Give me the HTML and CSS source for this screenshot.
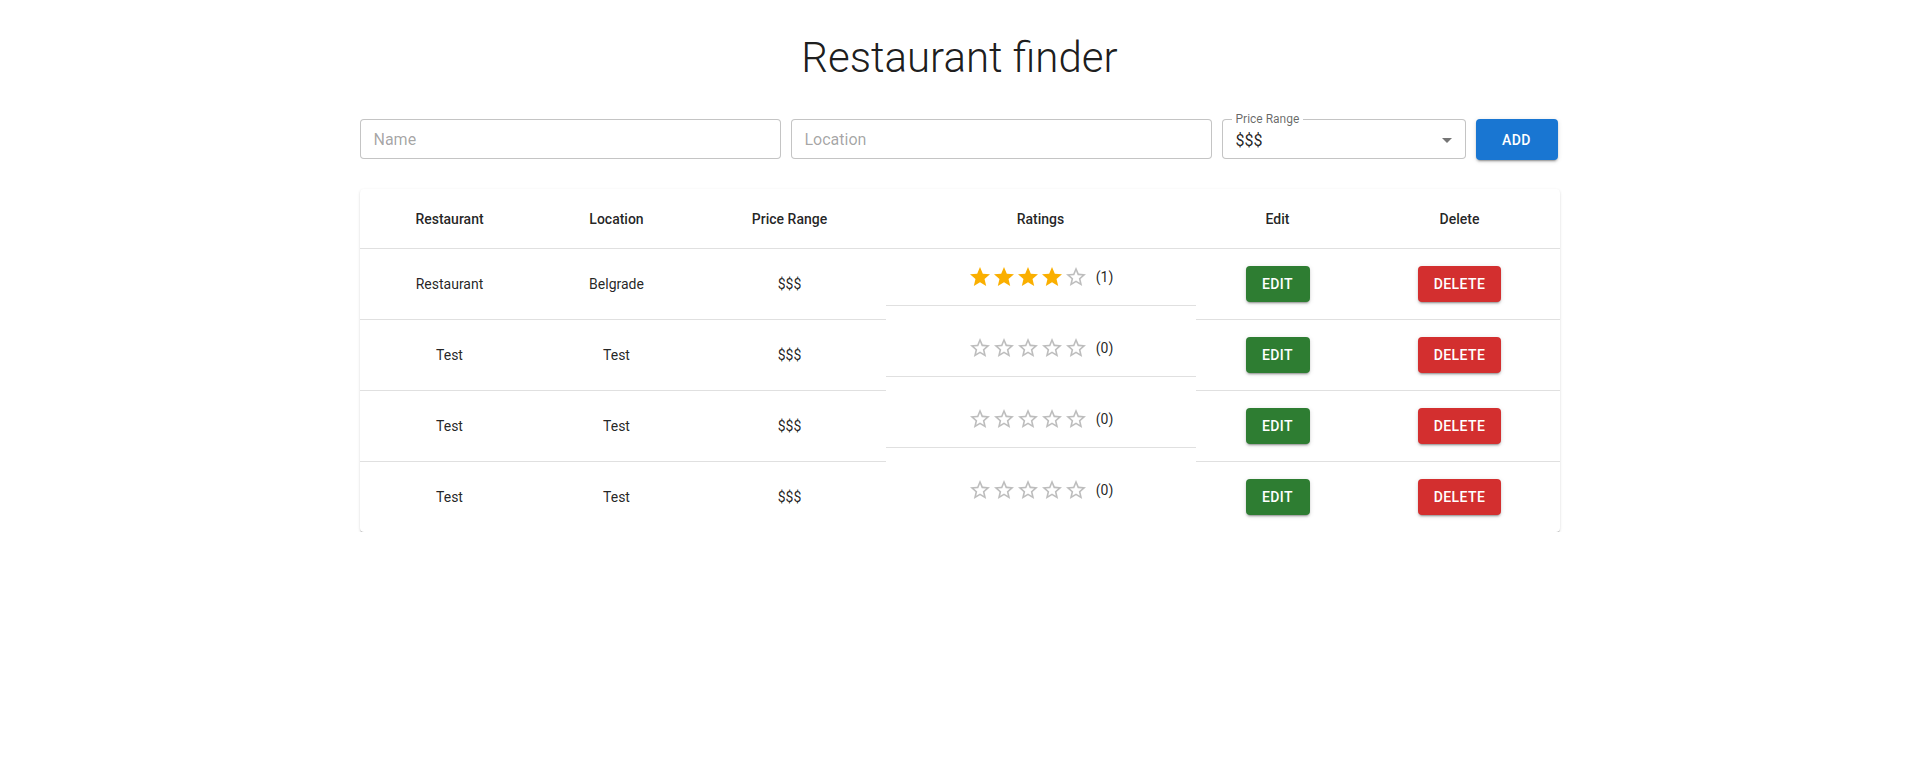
FILE: index.html
```html
<!DOCTYPE html>
<html lang="en">
<head>
<meta charset="utf-8">
<title>Restaurant finder</title>
<link rel="stylesheet" href="styles.css">
</head>
<body>
<div class="page">
  <h1 class="title">Restaurant finder</h1>
  <div class="form-row">
    <div class="field field-text"><input class="input" type="text" placeholder="Name"></div>
    <div class="field field-text"><input class="input" type="text" placeholder="Location"></div>
    <div class="field field-select">
      <span class="field-label">Price Range</span>
      <span class="select-value">$$$</span>
      <svg class="select-arrow" viewBox="0 0 24 24" width="24" height="24"><path d="M7 10l5 5 5-5z"/></svg>
    </div>
    <button class="btn btn-blue btn-add">ADD</button>
  </div>

  <div class="paper">
    <table class="table">
      <colgroup>
        <col class="c-name"><col class="c-loc"><col class="c-price"><col class="c-rate"><col class="c-edit"><col class="c-del">
      </colgroup>
      <thead>
        <tr>
          <th>Restaurant</th><th>Location</th><th>Price Range</th><th>Ratings</th><th>Edit</th><th>Delete</th>
        </tr>
      </thead>
      <tbody>
        <tr>
          <td>Restaurant</td><td>Belgrade</td><td>$$$</td>
          <td class="rate-cell"><div class="rate-inner"><span class="stars">
            <svg class="star on" viewBox="0 0 24 24"><path d="M12 17.27L18.18 21l-1.64-7.03L22 9.24l-7.19-.61L12 2 9.19 8.63 2 9.24l5.46 4.73L5.82 21z"/></svg>
            <svg class="star on" viewBox="0 0 24 24"><path d="M12 17.27L18.18 21l-1.64-7.03L22 9.24l-7.19-.61L12 2 9.19 8.63 2 9.24l5.46 4.73L5.82 21z"/></svg>
            <svg class="star on" viewBox="0 0 24 24"><path d="M12 17.27L18.18 21l-1.64-7.03L22 9.24l-7.19-.61L12 2 9.19 8.63 2 9.24l5.46 4.73L5.82 21z"/></svg>
            <svg class="star on" viewBox="0 0 24 24"><path d="M12 17.27L18.18 21l-1.64-7.03L22 9.24l-7.19-.61L12 2 9.19 8.63 2 9.24l5.46 4.73L5.82 21z"/></svg>
            <svg class="star off" viewBox="0 0 24 24"><path d="M22 9.24l-7.19-.62L12 2 9.19 8.63 2 9.24l5.46 4.73L5.82 21 12 17.27 18.18 21l-1.63-7.03L22 9.24zM12 15.4l-3.76 2.27 1-4.28-3.32-2.88 4.38-.38L12 6.1l1.71 4.04 4.38.38-3.32 2.88 1 4.28L12 15.4z"/></svg>
          </span><span class="count">(1)</span></div></td>
          <td class="btn-cell"><button class="btn btn-green">EDIT</button></td>
          <td class="btn-cell"><button class="btn btn-red">DELETE</button></td>
        </tr>
        <tr>
          <td>Test</td><td>Test</td><td>$$$</td>
          <td class="rate-cell"><div class="rate-inner"><span class="stars">
            <svg class="star off" viewBox="0 0 24 24"><path d="M22 9.24l-7.19-.62L12 2 9.19 8.63 2 9.24l5.46 4.73L5.82 21 12 17.27 18.18 21l-1.63-7.03L22 9.24zM12 15.4l-3.76 2.27 1-4.28-3.32-2.88 4.38-.38L12 6.1l1.71 4.04 4.38.38-3.32 2.88 1 4.28L12 15.4z"/></svg>
            <svg class="star off" viewBox="0 0 24 24"><path d="M22 9.24l-7.19-.62L12 2 9.19 8.63 2 9.24l5.46 4.73L5.82 21 12 17.27 18.18 21l-1.63-7.03L22 9.24zM12 15.4l-3.76 2.27 1-4.28-3.32-2.88 4.38-.38L12 6.1l1.71 4.04 4.38.38-3.32 2.88 1 4.28L12 15.4z"/></svg>
            <svg class="star off" viewBox="0 0 24 24"><path d="M22 9.24l-7.19-.62L12 2 9.19 8.63 2 9.24l5.46 4.73L5.82 21 12 17.27 18.18 21l-1.63-7.03L22 9.24zM12 15.4l-3.76 2.27 1-4.28-3.32-2.88 4.38-.38L12 6.1l1.71 4.04 4.38.38-3.32 2.88 1 4.28L12 15.4z"/></svg>
            <svg class="star off" viewBox="0 0 24 24"><path d="M22 9.24l-7.19-.62L12 2 9.19 8.63 2 9.24l5.46 4.73L5.82 21 12 17.27 18.18 21l-1.63-7.03L22 9.24zM12 15.4l-3.76 2.27 1-4.28-3.32-2.88 4.38-.38L12 6.1l1.71 4.04 4.38.38-3.32 2.88 1 4.28L12 15.4z"/></svg>
            <svg class="star off" viewBox="0 0 24 24"><path d="M22 9.24l-7.19-.62L12 2 9.19 8.63 2 9.24l5.46 4.73L5.82 21 12 17.27 18.18 21l-1.63-7.03L22 9.24zM12 15.4l-3.76 2.27 1-4.28-3.32-2.88 4.38-.38L12 6.1l1.71 4.04 4.38.38-3.32 2.88 1 4.28L12 15.4z"/></svg>
          </span><span class="count">(0)</span></div></td>
          <td class="btn-cell"><button class="btn btn-green">EDIT</button></td>
          <td class="btn-cell"><button class="btn btn-red">DELETE</button></td>
        </tr>
        <tr>
          <td>Test</td><td>Test</td><td>$$$</td>
          <td class="rate-cell"><div class="rate-inner"><span class="stars">
            <svg class="star off" viewBox="0 0 24 24"><path d="M22 9.24l-7.19-.62L12 2 9.19 8.63 2 9.24l5.46 4.73L5.82 21 12 17.27 18.18 21l-1.63-7.03L22 9.24zM12 15.4l-3.76 2.27 1-4.28-3.32-2.88 4.38-.38L12 6.1l1.71 4.04 4.38.38-3.32 2.88 1 4.28L12 15.4z"/></svg>
            <svg class="star off" viewBox="0 0 24 24"><path d="M22 9.24l-7.19-.62L12 2 9.19 8.63 2 9.24l5.46 4.73L5.82 21 12 17.27 18.18 21l-1.63-7.03L22 9.24zM12 15.4l-3.76 2.27 1-4.28-3.32-2.88 4.38-.38L12 6.1l1.71 4.04 4.38.38-3.32 2.88 1 4.28L12 15.4z"/></svg>
            <svg class="star off" viewBox="0 0 24 24"><path d="M22 9.24l-7.19-.62L12 2 9.19 8.63 2 9.24l5.46 4.73L5.82 21 12 17.27 18.18 21l-1.63-7.03L22 9.24zM12 15.4l-3.76 2.27 1-4.28-3.32-2.88 4.38-.38L12 6.1l1.71 4.04 4.38.38-3.32 2.88 1 4.28L12 15.4z"/></svg>
            <svg class="star off" viewBox="0 0 24 24"><path d="M22 9.24l-7.19-.62L12 2 9.19 8.63 2 9.24l5.46 4.73L5.82 21 12 17.27 18.18 21l-1.63-7.03L22 9.24zM12 15.4l-3.76 2.27 1-4.28-3.32-2.88 4.38-.38L12 6.1l1.71 4.04 4.38.38-3.32 2.88 1 4.28L12 15.4z"/></svg>
            <svg class="star off" viewBox="0 0 24 24"><path d="M22 9.24l-7.19-.62L12 2 9.19 8.63 2 9.24l5.46 4.73L5.82 21 12 17.27 18.18 21l-1.63-7.03L22 9.24zM12 15.4l-3.76 2.27 1-4.28-3.32-2.88 4.38-.38L12 6.1l1.71 4.04 4.38.38-3.32 2.88 1 4.28L12 15.4z"/></svg>
          </span><span class="count">(0)</span></div></td>
          <td class="btn-cell"><button class="btn btn-green">EDIT</button></td>
          <td class="btn-cell"><button class="btn btn-red">DELETE</button></td>
        </tr>
        <tr>
          <td>Test</td><td>Test</td><td>$$$</td>
          <td class="rate-cell"><div class="rate-inner"><span class="stars">
            <svg class="star off" viewBox="0 0 24 24"><path d="M22 9.24l-7.19-.62L12 2 9.19 8.63 2 9.24l5.46 4.73L5.82 21 12 17.27 18.18 21l-1.63-7.03L22 9.24zM12 15.4l-3.76 2.27 1-4.28-3.32-2.88 4.38-.38L12 6.1l1.71 4.04 4.38.38-3.32 2.88 1 4.28L12 15.4z"/></svg>
            <svg class="star off" viewBox="0 0 24 24"><path d="M22 9.24l-7.19-.62L12 2 9.19 8.63 2 9.24l5.46 4.73L5.82 21 12 17.27 18.18 21l-1.63-7.03L22 9.24zM12 15.4l-3.76 2.27 1-4.28-3.32-2.88 4.38-.38L12 6.1l1.71 4.04 4.38.38-3.32 2.88 1 4.28L12 15.4z"/></svg>
            <svg class="star off" viewBox="0 0 24 24"><path d="M22 9.24l-7.19-.62L12 2 9.19 8.63 2 9.24l5.46 4.73L5.82 21 12 17.27 18.18 21l-1.63-7.03L22 9.24zM12 15.4l-3.76 2.27 1-4.28-3.32-2.88 4.38-.38L12 6.1l1.71 4.04 4.38.38-3.32 2.88 1 4.28L12 15.4z"/></svg>
            <svg class="star off" viewBox="0 0 24 24"><path d="M22 9.24l-7.19-.62L12 2 9.19 8.63 2 9.24l5.46 4.73L5.82 21 12 17.27 18.18 21l-1.63-7.03L22 9.24zM12 15.4l-3.76 2.27 1-4.28-3.32-2.88 4.38-.38L12 6.1l1.71 4.04 4.38.38-3.32 2.88 1 4.28L12 15.4z"/></svg>
            <svg class="star off" viewBox="0 0 24 24"><path d="M22 9.24l-7.19-.62L12 2 9.19 8.63 2 9.24l5.46 4.73L5.82 21 12 17.27 18.18 21l-1.63-7.03L22 9.24zM12 15.4l-3.76 2.27 1-4.28-3.32-2.88 4.38-.38L12 6.1l1.71 4.04 4.38.38-3.32 2.88 1 4.28L12 15.4z"/></svg>
          </span><span class="count">(0)</span></div></td>
          <td class="btn-cell"><button class="btn btn-green">EDIT</button></td>
          <td class="btn-cell"><button class="btn btn-red">DELETE</button></td>
        </tr>
      </tbody>
    </table>
  </div>
</div>
</body>
</html>
```

FILE: styles.css
```css
* { box-sizing: border-box; }
html, body { margin: 0; padding: 0; background: #fff; }
body {
  font-family: Roboto, "Liberation Sans", Arial, sans-serif;
  color: rgba(0, 0, 0, 0.87);
  -webkit-font-smoothing: antialiased;
}
.page {
  width: 1200px;
  margin: 0 auto;
  display: flex;
  flex-direction: column;
}
.title {
  margin: 33px 0 0;
  font-size: 42px;
  font-weight: 300;
  line-height: 1.2;
  text-align: center;
  color: rgba(0, 0, 0, 0.9);
}
.form-row {
  margin-top: 36px;
  display: flex;
  gap: 10px;
  height: 41px;
}
.field {
  height: 40px;
  border: 1px solid rgba(0, 0, 0, 0.23);
  border-radius: 4px;
  background: #fff;
}
.field-text { flex: 0 0 421px; }
.input {
  width: 100%;
  height: 100%;
  border: 0;
  outline: 0;
  background: transparent;
  padding: 8.5px 13px;
  font-family: inherit;
  font-size: 16px;
  color: rgba(0, 0, 0, 0.87);
}
.input::placeholder { color: rgba(0, 0, 0, 0.37); opacity: 1; }
.field-select {
  flex: 0 0 244px;
  position: relative;
  display: flex;
  align-items: center;
  padding: 0 13px;
}
.field-label {
  position: absolute;
  top: -8px;
  left: 9px;
  padding: 0 4px;
  background: #fff;
  font-size: 12px;
  line-height: 14px;
  color: rgba(0, 0, 0, 0.6);
}
.select-value {
  font-size: 16px;
  line-height: 23px;
  padding-top: 3px;
  color: rgba(0, 0, 0, 0.87);
}
.select-arrow {
  position: absolute;
  right: 6px;
  top: 8px;
  fill: rgba(0, 0, 0, 0.54);
}
.btn {
  font-family: inherit;
  font-size: 14px;
  font-weight: 500;
  letter-spacing: 0.02857em;
  text-transform: uppercase;
  color: #fff;
  border: 0;
  border-radius: 4px;
  padding: 6px 16px;
  min-width: 64px;
  line-height: 24.5px;
  cursor: pointer;
  box-shadow: 0px 3px 1px -2px rgba(0,0,0,0.2), 0px 2px 2px 0px rgba(0,0,0,0.14), 0px 1px 5px 0px rgba(0,0,0,0.12);
}
.btn-add { flex: 0 0 82px; height: 41px; }
.btn-blue { background: #1976d2; }
.btn-green { background: #2e7d32; }
.btn-red { background: #d32f2f; }

.paper {
  margin-top: 29px;
  background: #fff;
  border-radius: 4px;
  overflow: hidden;
  box-shadow: 0px 2px 1px -1px rgba(0,0,0,0.2), 0px 1px 1px 0px rgba(0,0,0,0.14), 0px 1px 3px 0px rgba(0,0,0,0.12);
}
.table {
  width: 100%;
  border-collapse: collapse;
  table-layout: fixed;
}
.c-name { width: 180px; }
.c-loc { width: 154px; }
.c-price { width: 192px; }
.c-rate { width: 310px; }
.c-edit { width: 164px; }
.c-del { width: 200px; }
.table th, .table td {
  text-align: center;
  vertical-align: middle;
  padding: 16px;
  border-bottom: 1px solid rgb(224, 224, 224);
  font-size: 14px;
}
.table th {
  font-weight: 500;
  line-height: 24px;
  padding: 18px 16px 17px;
}
.table td {
  font-weight: 400;
  line-height: 20px;
}
.table td.btn-cell { padding: 17px 16px; }
.btn-cell .btn { vertical-align: top; display: inline-block; height: 36px; }
.table td.rate-cell {
  padding: 0;
  border-bottom: 0;
  vertical-align: top;
}
.rate-inner {
  padding: 16px;
  border-bottom: 1px solid rgb(224, 224, 224);
  display: flex;
  align-items: center;
  justify-content: center;
  gap: 8px;
}
.stars { display: inline-flex; }
.star { width: 24px; height: 24px; display: block; }
.star.on { fill: #faaf00; }
.star.off { fill: rgba(0, 0, 0, 0.26); }
.count { font-size: 14px; line-height: 20px; }
.table tbody tr:last-child td { border-bottom: 0; }
.table tbody tr:last-child .rate-inner { border-bottom: 0; }
```
